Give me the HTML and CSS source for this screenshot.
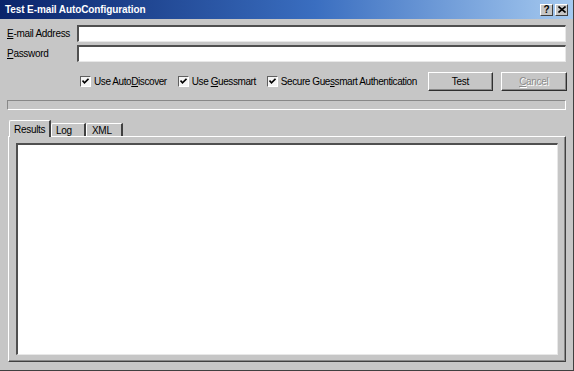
FILE: index.html
```html
<!DOCTYPE html>
<html lang="en">
<head>
    <meta charset="UTF-8">
    <title>Test E-mail AutoConfiguration</title>
    <link rel="stylesheet" href="styles.css">
</head>
<body>
    <div class="window">
        <div class="titlebar">
            <span class="title">Test E-mail AutoConfiguration</span>
            <div class="caption-buttons">
                <span class="caption-btn help">?</span>
                <span class="caption-btn close">
                    <svg width="8" height="7" viewBox="0 0 8 7"><path d="M0.5 0.5 L7.5 6.5 M7.5 0.5 L0.5 6.5" stroke="#000" stroke-width="1.6"/></svg>
                </span>
            </div>
        </div>

        <div class="content">
            <div class="field-row">
                <label class="field-label"><u>E</u>-mail Address</label>
                <div class="textbox"></div>
            </div>
            <div class="field-row">
                <label class="field-label"><u>P</u>assword</label>
                <div class="textbox"></div>
            </div>

            <div class="options-row">
                <label class="check">
                    <span class="check-box"><svg width="7" height="7" viewBox="0 0 7 7"><path d="M0.5 2.5 L2.5 4.8 L6.5 0.8" stroke="#000" stroke-width="1.6" fill="none"/></svg></span>
                    <span class="check-text">Use Auto<u>D</u>iscover</span>
                </label>
                <label class="check">
                    <span class="check-box"><svg width="7" height="7" viewBox="0 0 7 7"><path d="M0.5 2.5 L2.5 4.8 L6.5 0.8" stroke="#000" stroke-width="1.6" fill="none"/></svg></span>
                    <span class="check-text">Use <u>G</u>uessmart</span>
                </label>
                <label class="check">
                    <span class="check-box"><svg width="7" height="7" viewBox="0 0 7 7"><path d="M0.5 2.5 L2.5 4.8 L6.5 0.8" stroke="#000" stroke-width="1.6" fill="none"/></svg></span>
                    <span class="check-text">Secure Gue<u>s</u>smart Authentication</span>
                </label>
                <div class="buttons">
                    <button class="btn">Test</button>
                    <button class="btn disabled"><u>C</u>ancel</button>
                </div>
            </div>

            <div class="progress"></div>

            <div class="tabs">
                <span class="tab active">Results</span>
                <span class="tab">Log</span>
                <span class="tab">XML</span>
            </div>
            <div class="tab-panel">
                <div class="results"></div>
            </div>
        </div>
    </div>
</body>
</html>
```

FILE: styles.css
```css
body {
    margin: 0;
    padding: 0;
    font-family: 'Liberation Sans', Arial, sans-serif;
    font-size: 10px;
    letter-spacing: -0.3px;
    color: #000;
    background: #c6c6c6;
}

.window {
    width: 574px;
    height: 371px;
    box-sizing: border-box;
    background: #c6c6c6;
    border-right: 1px solid #404040;
    border-bottom: 1px solid #404040;
    display: flex;
    flex-direction: column;
    overflow: hidden;
}

.titlebar {
    height: 19px;
    flex-shrink: 0;
    display: flex;
    align-items: center;
    justify-content: space-between;
    padding: 0 5px 0 5px;
    background: linear-gradient(to right, #0a246a 0%, #3a6ec0 55%, #a6caf0 100%);
}

.title {
    color: #fff;
    font-weight: bold;
    font-size: 10px;
    letter-spacing: -0.1px;
}

.caption-buttons {
    display: flex;
    gap: 2px;
}

.caption-btn {
    width: 13px;
    height: 12px;
    box-sizing: border-box;
    background: #c6c6c6;
    border-top: 1px solid #fff;
    border-left: 1px solid #fff;
    border-right: 1px solid #404040;
    border-bottom: 1px solid #404040;
    display: flex;
    align-items: center;
    justify-content: center;
    font-weight: bold;
    font-size: 10px;
    line-height: 1;
}

.content {
    flex: 1;
    display: flex;
    flex-direction: column;
    padding: 6px 7px 8px 7px;
}

.field-row {
    display: flex;
    align-items: center;
    height: 17px;
    margin-bottom: 3px;
}

.field-label {
    width: 70px;
    flex-shrink: 0;
}

.textbox {
    flex: 1;
    height: 17px;
    box-sizing: border-box;
    background: #fff;
    border-top: 2px solid #505050;
    border-left: 2px solid #505050;
    border-right: 1px solid #e8e8e8;
    border-bottom: 1px solid #e8e8e8;
}

.options-row {
    display: flex;
    align-items: center;
    margin-top: 7px;
    padding-left: 73px;
    height: 19px;
}

.check {
    display: flex;
    align-items: center;
    gap: 3px;
    margin-right: 11px;
    white-space: nowrap;
}

.check-text {
    letter-spacing: -0.42px;
}

.check-box {
    width: 11px;
    height: 11px;
    flex-shrink: 0;
    box-sizing: border-box;
    background: #f4f4f4;
    border-top: 1px solid #606060;
    border-left: 1px solid #606060;
    border-right: 1px solid #fff;
    border-bottom: 1px solid #fff;
    display: flex;
    align-items: center;
    justify-content: center;
}

.buttons {
    margin-left: auto;
    display: flex;
    flex-shrink: 0;
    gap: 8px;
}

.btn {
    width: 65px;
    height: 19px;
    flex-shrink: 0;
    box-sizing: border-box;
    background: #c6c6c6;
    font-family: inherit;
    font-size: 10px;
    letter-spacing: -0.3px;
    padding: 0;
    border-top: 1px solid #fff;
    border-left: 1px solid #fff;
    border-right: 1px solid #303030;
    border-bottom: 1px solid #303030;
    box-shadow: inset -1px -1px 0 #888;
}

.btn.disabled {
    color: #8c8c8c;
    text-shadow: 1px 1px 0 #fff;
    width: 66px;
}

.progress {
    height: 10px;
    margin-top: 9px;
    box-sizing: border-box;
    border-top: 1px solid #888;
    border-left: 1px solid #888;
    border-right: 1px solid #fff;
    border-bottom: 1px solid #fff;
}

.tabs {
    display: flex;
    align-items: flex-end;
    margin-top: 10px;
    padding-left: 2px;
    height: 16px;
    position: relative;
    z-index: 1;
}

.tab {
    height: 13px;
    box-sizing: border-box;
    padding: 0 4px;
    border-top: 1px solid #fff;
    border-left: 1px solid #fff;
    border-right: 2px solid #404040;
    border-top-left-radius: 2px;
    display: flex;
    align-items: center;
    width: 35px;
}

.tab.active {
    height: 17px;
    width: 42px;
    margin-bottom: -1px;
    background: #c6c6c6;
    padding-left: 4px;
}

.tab:last-child {
    width: 37px;
    padding-left: 5px;
}

.tab-panel {
    flex: 1;
    margin-left: 1px;
    padding: 6px 7px 6px 7px;
    border-top: 1px solid #fff;
    border-left: 1px solid #fff;
    border-right: 1px solid #404040;
    border-bottom: 1px solid #404040;
    box-shadow: inset -1px -1px 0 #888;
    display: flex;
}

.results {
    flex: 1;
    background: #fff;
    border-top: 2px solid #505050;
    border-left: 2px solid #505050;
    border-right: 1px solid #e8e8e8;
    border-bottom: 1px solid #e8e8e8;
}
```
